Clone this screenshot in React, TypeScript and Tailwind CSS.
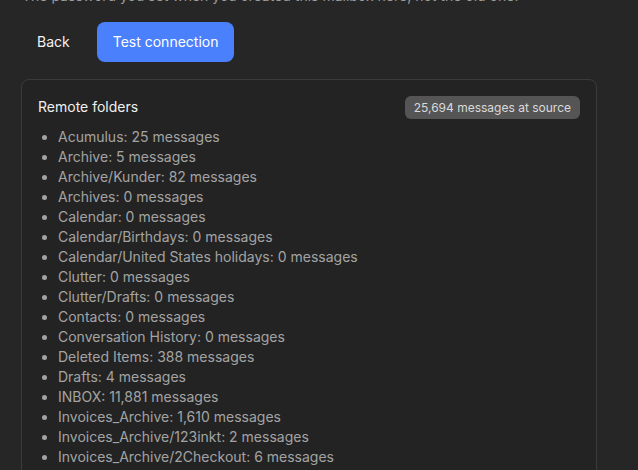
import React from "react";

const folders: [string, string][] = [
    ["Acumulus", "25"],
    ["Archive", "5"],
    ["Archive/Kunder", "82"],
    ["Archives", "0"],
    ["Calendar", "0"],
    ["Calendar/Birthdays", "0"],
    ["Calendar/United States holidays", "0"],
    ["Clutter", "0"],
    ["Clutter/Drafts", "0"],
    ["Contacts", "0"],
    ["Conversation History", "0"],
    ["Deleted Items", "388"],
    ["Drafts", "4"],
    ["INBOX", "11,881"],
    ["Invoices_Archive", "1,610"],
    ["Invoices_Archive/123inkt", "2"],
    ["Invoices_Archive/2Checkout", "6"],
];

export default function App() {
    return (
        <div className="h-screen w-full overflow-hidden bg-[#262626] pl-[21px] font-['Inter','Liberation_Sans',sans-serif]">
            <div className="w-[576px]">
                {/* Hint under the password field */}
                <p className="-mt-[14px] pl-px text-sm leading-5 text-[#9c9c9c]">
                    The password you set when you created this mailbox here, not the old one.
                </p>

                {/* Actions */}
                <div className="mt-4 flex flex-row items-center gap-[11px]">
                    <button className="h-10 rounded-lg px-4 text-sm text-[#f2f2f2]">Back</button>
                    <button className="h-10 rounded-lg bg-[#4a80fb] px-4 text-sm text-white">
                        Test connection
                    </button>
                </div>

                {/* Remote folders */}
                <div className="mt-[17px] rounded-lg border border-[#3b3b3b] bg-[#232323] p-4 pt-[15px]">
                    <div className="flex h-6 flex-row items-center justify-between">
                        <p className="text-sm text-[#f0f0f0]">Remote folders</p>
                        <span className="rounded-md bg-[#555555] px-[9px] py-0.5 text-xs leading-[19px] text-[#dadada]">
                            25,694 messages at source
                        </span>
                    </div>
                    <ul className="mt-2 list-disc pl-5 text-sm leading-5 text-[#a3a3a3] marker:text-[#a3a3a3]">
                        {folders.map(([name, count]) => (
                            <li key={name}>
                                {name}: {count} messages
                            </li>
                        ))}
                    </ul>
                </div>
            </div>
        </div>
    );
}
